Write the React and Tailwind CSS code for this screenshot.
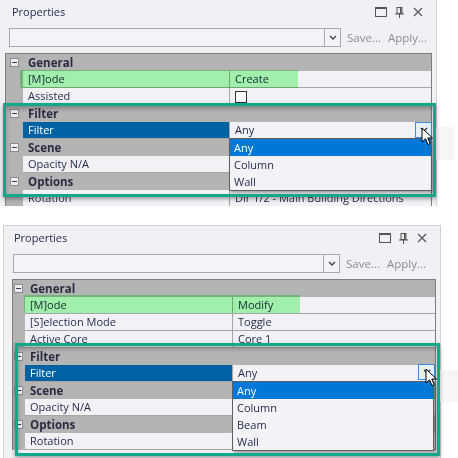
import React from "react";

const TEXT = "text-[#1f2747]";

function TitleIcons() {
  return (
    <div className="flex items-center">
      <svg width="12" height="10" viewBox="0 0 12 10" className="mr-[8px]">
        <rect x="0.5" y="0.5" width="11" height="9" fill="none" stroke="#555" strokeWidth="1" />
        <rect x="0.5" y="0.5" width="11" height="1.5" fill="#555" />
      </svg>
      <svg width="9" height="11" viewBox="0 0 9 11" className="mr-[9px]">
        <rect x="2" y="0.5" width="5" height="6" fill="none" stroke="#555" strokeWidth="1" />
        <rect x="5" y="1" width="1.5" height="5" fill="#555" />
        <rect x="0" y="6.5" width="9" height="1" fill="#555" />
        <rect x="4" y="7" width="1" height="4" fill="#555" />
      </svg>
      <svg width="10" height="10" viewBox="0 0 10 10">
        <path d="M1 1 L9 9 M9 1 L1 9" stroke="#555" strokeWidth="1.2" />
      </svg>
    </div>
  );
}

function Minus({ ml }) {
  return (
    <div
      className={`${ml} mt-[4px] w-[9px] h-[9px] border border-[#8c8c8c] bg-[#ededf2] flex items-center justify-center`}
    >
      <div className="w-[5px] h-[1px] bg-[#3a3a50]" />
    </div>
  );
}

function Grid({ width, gutterW, nameW, minusMl, rows }) {
  return (
    <div
      className="border-t border-l border-r border-[#7d7d7d] bg-[#b4b4b4]"
      style={{ width }}
    >
      {rows.map((r, i) =>
        r.cat ? (
          <div key={i} className="flex h-[17px] bg-[#b4b4b4]">
            <div className="shrink-0 h-full" style={{ width: gutterW }}>
              <Minus ml={minusMl} />
            </div>
            <span className="pl-[5px] font-bold text-[11.5px] leading-[17px] text-[#2a2c40]">
              {r.cat}
            </span>
          </div>
        ) : (
          <div key={i} className="flex h-[17px]">
            <div className="shrink-0 h-full bg-[#b4b4b4]" style={{ width: gutterW }} />
            <div
              className={`shrink-0 h-full border-b border-r border-[#a6a6a6] pl-[5px] text-[11px] leading-[16px] ${
                r.sel ? "bg-[#0062a3] text-white" : `bg-[#f2f2f6] ${TEXT}`
              }`}
              style={{ width: nameW }}
            >
              {r.name}
            </div>
            <div className={`flex-1 h-full border-b border-[#a6a6a6] bg-[#f2f2f6] pl-[5px] text-[11px] leading-[16px] ${TEXT} whitespace-nowrap overflow-hidden`}>
              {r.check ? (
                <div className="mt-[3px] w-[12px] h-[12px] border border-[#333] bg-white" />
              ) : (
                r.value
              )}
            </div>
          </div>
        )
      )}
    </div>
  );
}

function Panel({ className, comboW, titlePl, grid }) {
  return (
    <div className={`relative overflow-hidden bg-[#f0f0f5] ${className}`}>
      <div className="h-[24px] flex items-center justify-between pr-[13px]">
        <span className={`${TEXT} text-[11px]`} style={{ paddingLeft: titlePl }}>
          Properties
        </span>
        <TitleIcons />
      </div>
      <div className="mt-[4px] h-[19px] flex items-center pl-[9px]">
        <div
          className="h-[19px] border border-[#a9a9ad] bg-[#f4f4f8] flex justify-end"
          style={{ width: comboW }}
        >
          <div className="w-[16px] h-full border-l border-[#a9a9ad] flex items-center justify-center">
            <svg width="8" height="6" viewBox="0 0 8 6">
              <path d="M1 1 L4 4 L7 1" fill="none" stroke="#444" strokeWidth="1.4" />
            </svg>
          </div>
        </div>
        <span className="ml-[6px] text-[11.5px] text-[#8b8b96]">Save...</span>
        <span className="ml-[7px] text-[11.5px] text-[#8b8b96]">Apply...</span>
      </div>
      <div className="mt-[6px]" style={{ paddingLeft: grid.left }}>
        <Grid {...grid} />
      </div>
    </div>
  );
}

function Cursor({ x, y }) {
  return (
    <svg
      width="13"
      height="20"
      viewBox="0 0 13 20"
      className="absolute"
      style={{ left: x, top: y }}
    >
      <path
        d="M1 1 L1 15 L4.5 11.8 L7 17.5 L9.2 16.5 L6.8 11 L11.5 11 Z"
        fill="white"
        stroke="black"
        strokeWidth="1"
        strokeLinejoin="round"
      />
    </svg>
  );
}

function DropBtn({ x, y }) {
  return (
    <div
      className="absolute w-[17px] h-[16px] border border-[#3b8de2] bg-[#e6f0fb] flex items-center justify-center"
      style={{ left: x, top: y }}
    >
      <svg width="8" height="6" viewBox="0 0 8 6">
        <path d="M1 1 L4 4 L7 1" fill="none" stroke="#333" strokeWidth="1.3" />
      </svg>
    </div>
  );
}

function DropList({ x, y, w, items }) {
  return (
    <div
      className="absolute border border-[#5f5f5f] bg-[#f2f2f7] shadow-[2px_2px_3px_rgba(0,0,0,0.35)]"
      style={{ left: x, top: y, width: w }}
    >
      {items.map((it, i) => (
        <div
          key={it}
          className={`h-[17px] pl-[4px] text-[11px] leading-[17px] ${
            i === 0 ? "bg-[#0078d7] text-white" : TEXT
          }`}
        >
          {it}
        </div>
      ))}
    </div>
  );
}

export default function App() {
  const rows1 = [
    { cat: "General" },
    { name: "[M]ode", value: "Create" },
    { name: "Assisted", check: true },
    { cat: "Filter" },
    { name: "Filter", value: "Any", sel: true },
    { cat: "Scene" },
    { name: "Opacity N/A", value: "" },
    { cat: "Options" },
    { name: "Rotation", value: "Dir 1/2 - Main Building Directions" },
  ];
  const rows2 = [
    { cat: "General" },
    { name: "[M]ode", value: "Modify" },
    { name: "[S]election Mode", value: "Toggle" },
    { name: "Active Core", value: "Core 1" },
    { cat: "Filter" },
    { name: "Filter", value: "Any", sel: true },
    { cat: "Scene" },
    { name: "Opacity N/A", value: "" },
    { cat: "Options" },
    { name: "Rotation", value: "" },
  ];

  return (
    <div className="relative w-[458px] h-[458px] overflow-hidden bg-white font-['Open_Sans',sans-serif]">
      <Panel
        className="w-[437px] h-[206px] border-r border-[#d2d2d6]"
        comboW={332}
        titlePl={12}
        grid={{ left: 5, width: 427, gutterW: 17, nameW: 207, minusMl: "ml-[4px]", rows: rows1 }}
      />
      <Panel
        className="ml-[3px] mt-[19px] w-[438px] h-[233px] border border-b-0 border-[#d2d2d6]"
        comboW={327}
        titlePl={10}
        grid={{ left: 8, width: 424, gutterW: 12, nameW: 208, minusMl: "ml-[1px]", rows: rows2 }}
      />

      {/* green highlights (multiplied so text stays dark) */}
      <div className="absolute left-[20px] top-[70px] w-[278px] h-[18px] bg-[#a9fdb1] mix-blend-multiply" />
      <div className="absolute left-[24px] top-[295px] w-[276px] h-[18px] bg-[#a9fdb1] mix-blend-multiply" />

      {/* faint hover areas */}
      <div className="absolute left-[432px] top-[127px] w-[22px] h-[33px] bg-[#f6f6f7]" />
      <div className="absolute left-[437px] top-[370px] w-[21px] h-[32px] bg-[#f6f6f7]" />

      {/* top panel overlays */}
      <DropBtn x={415} y={122} />
      <DropList x={229} y={138} w={203} items={["Any", "Column", "Wall"]} />
      <div className="absolute left-[3px] top-[103px] w-[433px] h-[94px] border-[3px] border-[#13a88a] shadow-[0_2px_4px_rgba(0,0,0,0.35),inset_0_3px_4px_rgba(0,0,0,0.25)]" />
      <Cursor x={421} y={127} />

      {/* bottom panel overlays */}
      <DropBtn x={418} y={364} />
      <DropList x={232} y={381} w={202} items={["Any", "Column", "Beam", "Wall"]} />
      <div className="absolute left-[15px] top-[343px] w-[425px] h-[113px] border-[3px] border-[#13a88a] shadow-[0_2px_4px_rgba(0,0,0,0.35),inset_0_3px_4px_rgba(0,0,0,0.25)]" />
      <Cursor x={425} y={368} />
    </div>
  );
}
